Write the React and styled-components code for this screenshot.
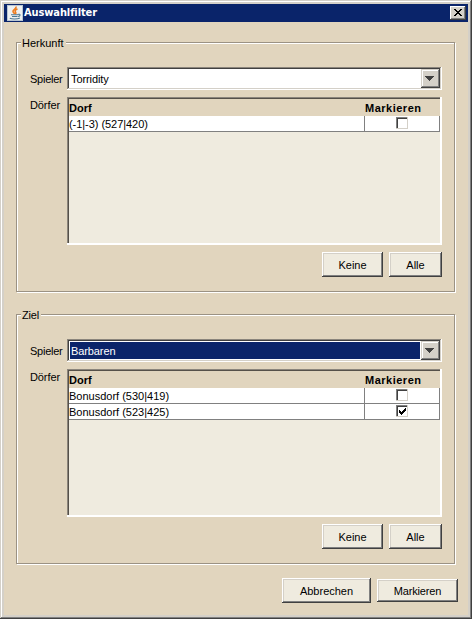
import React from "react";
import styled, { createGlobalStyle, css } from "styled-components";

const Global = createGlobalStyle`
  * { box-sizing: border-box; }
  body { margin: 0; overflow: hidden; }
`;

const sunken = css`
  box-shadow: inset -1px -1px #fff, inset 1px 1px #8b857c,
    inset -2px -2px #d4d0c8, inset 2px 2px #404040;
`;
const raised = css`
  box-shadow: inset -1px -1px #404040, inset 1px 1px #fff,
    inset -2px -2px #808080, inset 2px 2px #d4d0c8;
`;

const Window = styled.div`
  width: 472px;
  height: 619px;
  padding: 4px;
  background: #e1d5be;
  color: #000;
  font: 11px/13px "Liberation Sans", Arial, sans-serif;
  box-shadow: inset -1px -1px #404040, inset 1px 1px #d4d0c8,
    inset -2px -2px #808080, inset 2px 2px #fff, inset 0 0 0 4px #d4d0c8;
`;

const TitleBar = styled.header`
  display: flex;
  align-items: center;
  height: 18px;
  padding: 0 2px 0 3px;
  background: #0a246a;
  color: #fff;
`;

const Title = styled.h1`
  flex: 1;
  margin: 0 0 0 1px;
  font: bold 11px/16px "DejaVu Sans Condensed", "DejaVu Sans", sans-serif;
  letter-spacing: -0.1px;
`;

const CloseButton = styled.button`
  display: flex;
  width: 16px;
  height: 14px;
  padding: 3px 4px;
  border: 0;
  background: #d4d0c8;
  ${raised}
`;

const Content = styled.main`
  display: flex;
  flex-direction: column;
  padding: 20px 13px 0 12px;
`;

const Group = styled.section`
  position: relative;
  width: 439px;
  height: 250px;
  margin-bottom: 22px;
  padding: 24px 12px 0 12px;
  border: 1px solid #9b9284;
  box-shadow: 1px 1px #fff, inset 1px 1px #fff;
`;

const Legend = styled.h2`
  position: absolute;
  left: 4px;
  top: -7px;
  margin: 0;
  padding: 0 2px 0 1px;
  background: #e1d5be;
  font-size: 11px;
  line-height: 14px;
  font-weight: normal;
  letter-spacing: ${(p) => p.$spacing}px;
`;

const Field = styled.div`
  display: grid;
  grid-template-columns: 38px 375px;
  margin-bottom: 7px;
`;

const Label = styled.span`
  padding-top: ${(p) => p.$top}px;
  padding-left: 1px;
  letter-spacing: ${(p) => p.$spacing}px;
`;

const Combo = styled.div`
  display: flex;
  height: 23px;
  padding: 2px;
  background: #fff;
  ${sunken}
`;

const ComboValue = styled.span`
  flex: 1;
  margin: 1px;
  padding: 3px 0 0 1px;
  line-height: 13px;
  letter-spacing: ${(p) => p.$spacing}px;
  background: ${(p) => (p.$selected ? "#0a246a" : "#fff")};
  color: ${(p) => (p.$selected ? "#fff" : "#000")};
`;

const ComboButton = styled.span`
  display: flex;
  width: 19px;
  height: 19px;
  padding: 7px 0 0 4px;
  background: #d4d0c8;
  box-shadow: inset -1px -1px #404040, inset 1px 1px #d4d0c8,
    inset -2px -2px #808080, inset 2px 2px #fff;
`;

const ListPane = styled.div`
  height: 148px;
  padding: 2px;
  background: #efebdf;
  box-shadow: inset -2px -2px #fff, inset 1px 1px #8b857c, inset 2px 2px #555049;
`;

const HeaderRow = styled.div`
  display: grid;
  grid-template-columns: 296px 75px;
  height: 17px;
  padding-top: 3px;
  background: #e1d5be;
  font-weight: bold;
`;

const HeaderCell = styled.span`
  letter-spacing: ${(p) => p.$spacing}px;
`;

const Row = styled.div`
  display: grid;
  grid-template-columns: 296px 75px;
  height: 16px;
  background: #fff;
  border-bottom: 1px solid #808080;
`;

const Cell = styled.span`
  padding: ${(p) => (p.$check ? "1px 0 0 31px" : "2px 0 0 0")};
  border-right: 1px solid #808080;
  letter-spacing: ${(p) => p.$spacing || 0}px;
  white-space: nowrap;
`;

const CheckBox = styled.span`
  display: block;
  width: 12px;
  height: 12px;
  padding: 3px;
  background: #fff;
  box-shadow: inset -1px -1px #d4d0c8, inset 1px 1px #808080,
    inset 2px 2px #404040;
`;

const Actions = styled.div`
  display: flex;
  justify-content: flex-end;
  align-items: center;
  gap: 6px;
`;

const Footer = styled(Actions)`
  margin-top: -8px;
  margin-right: -3px;
`;

const Button = styled.button`
  width: ${(p) => p.$width}px;
  height: ${(p) => p.$height || 25}px;
  padding: 2px 0 0;
  border: 0;
  background: #efebdf;
  color: #000;
  font: inherit;
  letter-spacing: ${(p) => p.$spacing || 0}px;
  ${raised}
`;

const Glyph = styled.svg`
  display: block;
  flex: none;
`;

const JavaIcon = () => (
  <Glyph width="16" height="16" viewBox="0 0 16 16">
    <rect width="16" height="16" fill="#b9c6d3" />
    <rect x="1" y="1" width="14" height="14" fill="#eef0f0" />
    <path d="M9 1.5C10 4 5.5 4.500 6 6.500c.2 1 1.300 1.500 1.500 2.500M10.500 4C7.500 5 8 6.500 8.700 7.500c.5.8 0 1.200-.4 1.600" fill="none" stroke="#ee7d20" strokeWidth="1.600" />
    <path d="M4 9.700h7M5 11.500h5.500M10.800 9.500c3-1 3 1.600.2 2M2.800 13.300c2 1 8 1 10-.3" fill="none" stroke="#4d7892" strokeWidth="1.100" />
  </Glyph>
);

const CloseIcon = () => (
  <Glyph width="8" height="7" viewBox="0 0 8 7" shapeRendering="crispEdges">
    <path d="M0 0h2v1h1v1h2V1h1V0h2v1H7v1H6v1H5v1h1v1h1v1h1v1H6V6H5V5H3v1H2v1H0V6h1V5h1V4h1V3H2V2H1V1H0z" />
  </Glyph>
);

const ArrowIcon = () => (
  <Glyph width="9" height="5" viewBox="0 0 9 5" shapeRendering="crispEdges">
    <path d="M0 0h9v1H8v1H7v1H6v1H5v1H4V4H3V3H2V2H1V1H0z" fill="#404040" />
  </Glyph>
);

const CheckIcon = () => (
  <Glyph width="7" height="7" viewBox="0 0 7 7" shapeRendering="crispEdges">
    <path d="M0 2h1v1h1v1h1V3h1V2h1V1h1V0h1v3H6v1H5v1H4v1H3v1H2V6H1V5H0z" />
  </Glyph>
);

function FilterGroup({ title, titleSpacing, player, playerSpacing, selected, villages }) {
  return (
    <Group>
      <Legend $spacing={titleSpacing}>{title}</Legend>
      <Field>
        <Label $top={6} $spacing={-0.25}>Spieler</Label>
        <Combo>
          <ComboValue $selected={selected} $spacing={playerSpacing}>{player}</ComboValue>
          <ComboButton><ArrowIcon /></ComboButton>
        </Combo>
      </Field>
      <Field>
        <Label $top={2} $spacing={-0.1}>Dörfer</Label>
        <ListPane>
          <HeaderRow>
            <HeaderCell $spacing={0}>Dorf</HeaderCell>
            <HeaderCell $spacing={0.5}>Markieren</HeaderCell>
          </HeaderRow>
          {villages.map((v) => (
            <Row key={v.name}>
              <Cell $spacing={v.spacing}>{v.name}</Cell>
              <Cell $check><CheckBox>{v.checked && <CheckIcon />}</CheckBox></Cell>
            </Row>
          ))}
        </ListPane>
      </Field>
      <Actions>
        <Button $width={61}>Keine</Button>
        <Button $width={53}>Alle</Button>
      </Actions>
    </Group>
  );
}

export default function App() {
  return (
    <>
      <Global />
      <Window>
        <TitleBar>
          <JavaIcon />
          <Title>Auswahlfilter</Title>
          <CloseButton><CloseIcon /></CloseButton>
        </TitleBar>
        <Content>
          <FilterGroup
            title="Herkunft" titleSpacing={0}
            player="Torridity" playerSpacing={-0.1}
            villages={[{ name: "(-1|-3) (527|420)", spacing: -0.05 }]}
          />
          <FilterGroup
            title="Ziel" titleSpacing={-0.2}
            player="Barbaren" playerSpacing={-0.1} selected
            villages={[
              { name: "Bonusdorf (530|419)", spacing: 0 },
              { name: "Bonusdorf (523|425)", spacing: 0, checked: true },
            ]}
          />
          <Footer>
            <Button $width={89}>Abbrechen</Button>
            <Button $width={81} $height={23} $spacing={-0.15}>Markieren</Button>
          </Footer>
        </Content>
      </Window>
    </>
  );
}
